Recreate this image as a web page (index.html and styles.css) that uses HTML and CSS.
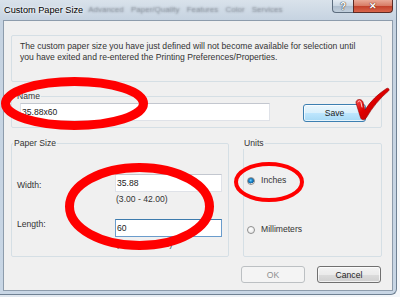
FILE: index.html
```html
<!DOCTYPE html>
<html lang="en">
<head>
    <meta charset="UTF-8">
    <title>Custom Paper Size</title>
    <link rel="stylesheet" href="styles.css">
</head>
<body>
    <div class="screen">
        <div class="window">
            <div class="titlebar">
                <span class="title">Custom Paper Size</span>
                <span class="behind">Advanced Paper/Quality Features Color Services</span>
                <div class="caption-buttons">
                    <span class="cap help">?</span>
                    <span class="cap close">✕</span>
                </div>
            </div>

            <div class="client">
                <!-- notice -->
                <div class="info">
                    The custom paper size you have just defined will not become available for selection until<br>
                    you have exited and re-entered the Printing Preferences/Properties.
                </div>

                <!-- name -->
                <fieldset class="group name-group">
                    <legend>Name</legend>
                    <div class="name-row">
                        <input type="text" class="field name-field" value="35.88x60">
                        <button class="btn save">Save</button>
                    </div>
                </fieldset>

                <div class="group-row">
                    <!-- paper size -->
                    <fieldset class="group paper-group">
                        <legend>Paper Size</legend>
                        <div class="paper-grid">
                            <label class="lbl lbl-width">Width:</label>
                            <input type="text" class="field" value="35.88">
                            <span class="range">(3.00 - 42.00)</span>
                            <label class="lbl lbl-length">Length:</label>
                            <input type="text" class="field focused" value="60">
                            <span class="range">(3.00 - 200.00)</span>
                        </div>
                    </fieldset>

                    <!-- units -->
                    <fieldset class="group units-group">
                        <legend>Units</legend>
                        <div class="radios">
                            <label class="radio"><span class="dot checked"></span>Inches</label>
                            <label class="radio"><span class="dot"></span>Millimeters</label>
                        </div>
                    </fieldset>
                </div>

                <div class="actions">
                    <button class="btn" disabled>OK</button>
                    <button class="btn">Cancel</button>
                </div>
            </div>
        </div>

        <!-- red marks drawn on top of the screenshot -->
        <svg class="marks" width="400" height="297" viewBox="0 0 400 297">
            <defs>
                <linearGradient id="tick" x1="0" y1="0" x2="1" y2="1">
                    <stop offset="0" stop-color="#ff7a7a"/>
                    <stop offset="0.45" stop-color="#e00000"/>
                    <stop offset="1" stop-color="#a80000"/>
                </linearGradient>
            </defs>
            <ellipse cx="74.5" cy="103.5" rx="69" ry="22" fill="none" stroke="#ff0000" stroke-width="9"/>
            <ellipse cx="139.5" cy="206.5" rx="70" ry="39" fill="none" stroke="#ff0000" stroke-width="9"/>
            <ellipse cx="269" cy="182" rx="33" ry="18" fill="none" stroke="#ff0000" stroke-width="4"/>
            <path d="M356,103 C355.5,99 361.5,98 363,102 L365,110 C370.5,101 378,94 386.5,88.5 C388.5,87.5 390,89.5 388.5,91 C380,98 372,108 366.5,117.5 C365,120.5 361.5,120.5 360.5,117.5 Z" fill="url(#tick)" stroke="#900000" stroke-width="0.6"/>
            <path d="M358,102 C358.5,100.5 360.5,100.5 361,102.5 L362,107" fill="none" stroke="#ffd0d0" stroke-width="1" stroke-linecap="round"/>
        </svg>
    </div>
</body>
</html>
```

FILE: styles.css
```css
* {
    box-sizing: border-box;
    margin: 0;
    padding: 0;
}

body {
    font-family: "Liberation Sans", Arial, sans-serif;
    font-size: 8.6px;
    color: #333;
    background-color: #e9eef3;
}

.screen {
    position: relative;
    width: 400px;
    height: 297px;
    overflow: hidden;
    background: linear-gradient(90deg, #dfe6ee, #f4f7fa);
}

.window {
    width: 397px;
    height: 295px;
    display: flex;
    flex-direction: column;
    padding: 0 3px 3px 3px;
    background: linear-gradient(#d9e2eb, #c6d3e1 20px, #c8d6e5);
    border-right: 1px solid #6f8193;
    border-bottom: 1px solid #6f8193;
    border-radius: 0 0 6px 0;
}

/* title bar */

.titlebar {
    height: 20px;
    display: flex;
    align-items: flex-start;
    flex-shrink: 0;
}

.title {
    line-height: 20px;
    padding-left: 1px;
    font-size: 9.2px;
    color: #000;
    text-shadow: 0 0 4px #fff, 0 0 2px #fff;
}

.behind {
    margin-left: 5px;
    line-height: 20px;
    font-size: 8px;
    word-spacing: 5px;
    color: transparent;
    text-shadow: 0 0 2px rgba(80, 85, 95, 0.7);
}

.caption-buttons {
    display: flex;
    margin-left: auto;
}

.cap {
    height: 13px;
    display: flex;
    align-items: center;
    justify-content: center;
    color: #fff;
    font-weight: bold;
    border: 1px solid #5d6d7e;
    border-top: none;
}

.help {
    width: 21px;
    font-size: 10px;
    border-radius: 0 0 0 4px;
    border-right: none;
    background: linear-gradient(#e4ebf2, #c9d5e1 50%, #aebdcd 51%, #c3d0dd);
    text-shadow: 0 0 1px #222, 0 0 1px #222;
}

.close {
    width: 40px;
    font-size: 9px;
    border-color: #5c2a24;
    border-radius: 0 0 4px 0;
    background: linear-gradient(#e9a997, #d77a64 50%, #c2402a 51%, #d9654b);
    text-shadow: 0 0 1px #5a1a10, 0 0 1px #5a1a10;
}

/* client area */

.client {
    flex: 1;
    display: flex;
    flex-direction: column;
    padding: 14px 10px 0 7px;
    background-color: #f0f0f0;
    border: 1px solid #8d9cac;
}

.info {
    height: 47px;
    padding: 5px 8px;
    line-height: 10.5px;
    border: 1px solid #d5dfe5;
    border-radius: 2px;
}

.group {
    border: 1px solid #d5dfe5;
    border-radius: 2px;
    min-width: 0;
}

.group legend {
    margin-left: -4px;
    padding: 0 1px;
    line-height: 11px;
}

.name-group {
    margin-top: 9px;
    padding: 1px 8px 5px 8px;
}

.name-row {
    display: flex;
    align-items: flex-start;
}

.field {
    height: 18px;
    padding-left: 1px;
    font-family: inherit;
    font-size: 8.6px;
    color: #222;
    background-color: #fff;
    border: 1px solid #dfe2e8;
    border-top-color: #c3c7cf;
    outline: none;
}

.field.focused {
    border-color: #6a9ccc;
    border-top-color: #3d7bad;
}

.name-field {
    width: 250px;
}

.btn {
    width: 64px;
    height: 17px;
    font-family: inherit;
    font-size: 8.6px;
    color: #222;
    border: 1px solid #707070;
    border-radius: 3px;
    background: linear-gradient(#f3f3f3, #ebebeb 50%, #dcdcdc 51%, #d0d0d0);
    box-shadow: inset 0 0 0 1px rgba(255, 255, 255, 0.7);
}

.btn:disabled {
    color: #8f8f8f;
    border-color: #bcc0c3;
    background: #f4f4f4;
    box-shadow: none;
}

.save {
    width: 63px;
    height: 18px;
    margin: 1px 0 0 33px;
    border-color: #3c7fb1;
    background: linear-gradient(#eaf6fd, #d9f0fc 50%, #bee6fd 51%, #a7d9f5);
}

/* paper size + units */

.group-row {
    display: flex;
    gap: 14px;
    margin-top: 10px;
}

.paper-group {
    width: 218px;
    height: 119px;
    padding: 0 0 0 5px;
}

.paper-grid {
    display: grid;
    grid-template-columns: 98px 107px;
    grid-template-rows: 18px 27px 18px 11px;
    padding-top: 25px;
}

.paper-grid .field {
    width: 107px;
}

.lbl {
    line-height: 11px;
}

.lbl-width {
    padding-top: 6px;
}

.range {
    grid-column: 2;
    padding: 2px 0 0 1px;
    line-height: 11px;
}

.units-group {
    width: 139px;
    height: 119px;
    padding: 0 0 0 3px;
}

.radios {
    display: flex;
    flex-direction: column;
    gap: 38px;
    padding-top: 26px;
}

.radio {
    display: flex;
    align-items: center;
    gap: 6px;
    line-height: 11px;
}

.dot {
    width: 8px;
    height: 8px;
    border-radius: 50%;
    border: 1px solid #8e8f8f;
    background: radial-gradient(circle at 40% 35%, #fff, #e3e3e3);
}

.dot.checked {
    background: radial-gradient(circle at 45% 40%, #7fd4ff 0, #1a8ad3 1.5px, #135e97 3px, #e8e8e8 3.2px, #f6f6f6);
}

.actions {
    display: flex;
    justify-content: flex-end;
    gap: 12px;
    margin-top: 9px;
    padding-right: 1px;
}

.marks {
    position: absolute;
    left: 0;
    top: 0;
    pointer-events: none;
}
```
